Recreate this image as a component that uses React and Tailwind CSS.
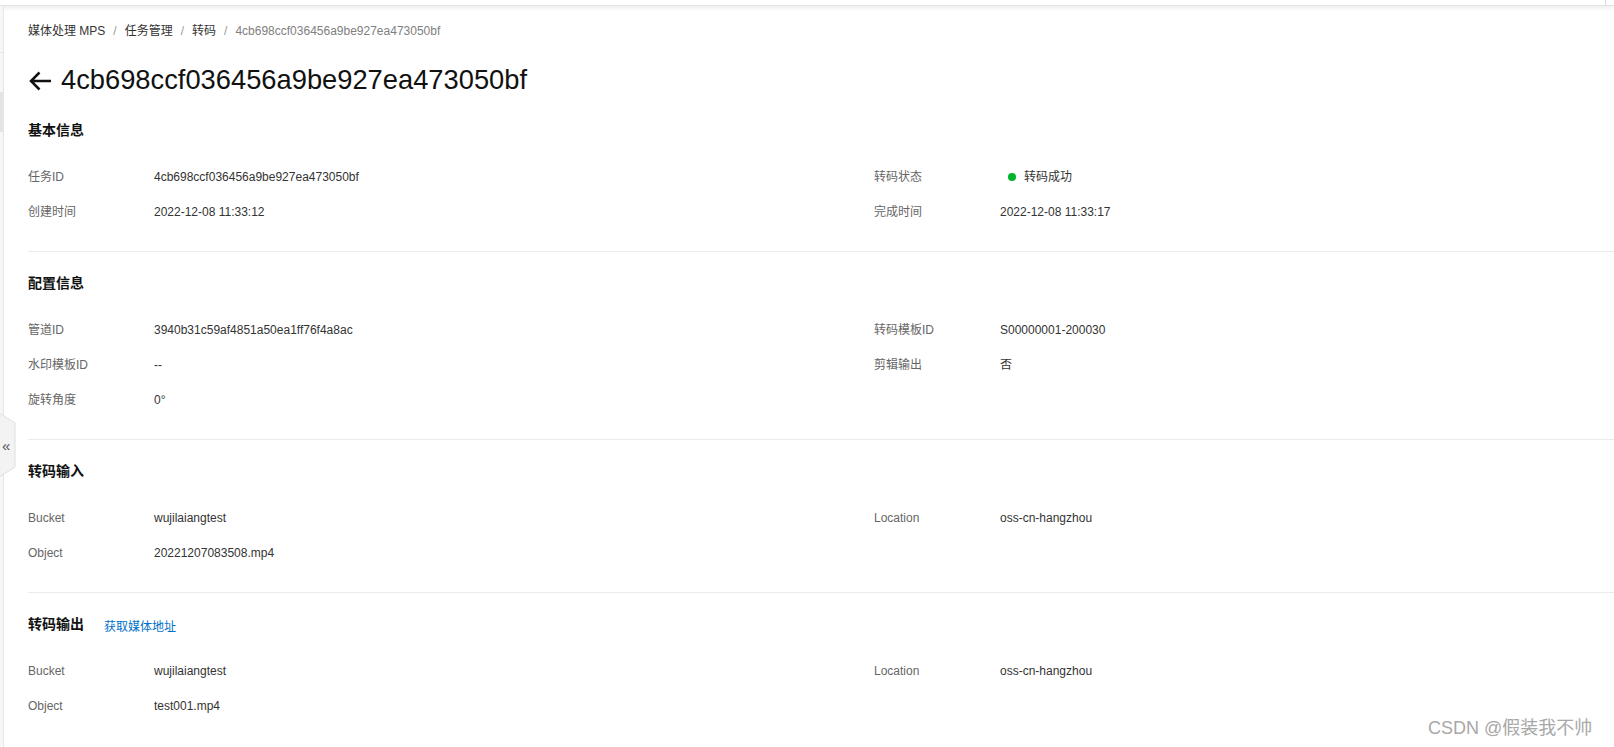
const font = { fontFamily: '"Liberation Sans", "Noto Sans CJK SC", sans-serif' };

function Row({ items }) {
  return (
    <div className="flex h-[35px] items-center text-[12px]">
      {items.map((it, i) => (
        <div key={i} className="flex w-[846px] shrink-0 items-center">
          {it && (
            <>
              <div className="w-[126px] shrink-0 text-[#666]">{it.label}</div>
              <div className="flex items-center text-[#333]">
                {it.dot && <span className="mr-[8px] ml-[8px] inline-block h-[8px] w-[8px] rounded-full bg-[#00b42a]" />}
                {it.value}
              </div>
            </>
          )}
        </div>
      ))}
    </div>
  );
}

function Section({ title, extra, rows, last }) {
  return (
    <div className={`${last ? "" : "border-b border-[#ebebeb]"} pt-[21px] pb-[22px]`}>
      <div className="mb-[18px] flex h-[21px] items-center">
        <span className="text-[14px] font-bold text-[#111]">{title}</span>
        {extra && <span className="ml-[20px] mt-[4px] text-[12px] text-[#0070cc]">{extra}</span>}
      </div>
      {rows.map((r, i) => (
        <Row key={i} items={r} />
      ))}
    </div>
  );
}

export default function App() {
  return (
    <div className="relative h-[747px] w-[1614px] overflow-hidden bg-white" style={font}>
      {/* top bar */}
      <div className="flex h-[6px] w-full justify-end border-b border-[#e3e3e3] bg-white shadow-[0_2px_4px_rgba(0,0,0,0.08)]">
        <div className="w-[9px] border-l border-[#dcdcdc]" />
      </div>
      <div className="flex h-[741px]">
        {/* sidebar strip */}
        <div className="flex w-[4px] shrink-0 flex-col border-r border-[#e6e6e6] bg-[#f7f7f7]">
          <div className="h-[47px] border-b border-[#e6e6e6]" />
          <div className="mt-[39px] h-[40px] bg-[#e4e4e4]" />
        </div>
        <div className="flex-1 pl-[24px]">
          {/* breadcrumb */}
          <div className="mt-[15px] flex h-[20px] items-center text-[12px] text-[#333]">
            <span>媒体处理 MPS</span>
            <span className="mx-[8px] text-[#999]">/</span>
            <span>任务管理</span>
            <span className="mx-[8px] text-[#999]">/</span>
            <span>转码</span>
            <span className="mx-[8px] text-[#999]">/</span>
            <span className="text-[#808080]">4cb698ccf036456a9be927ea473050bf</span>
          </div>
          {/* title */}
          <div className="mt-[21px] flex h-[36px] items-center">
            <svg width="24" height="24" viewBox="0 0 24 24" className="mr-[9px] mt-[2px]">
              <path d="M23 12H3M11.5 3.5L3 12l8.5 8.5" fill="none" stroke="#111" strokeWidth="2.5" />
            </svg>
            <span className="text-[27.3px] text-[#111]">4cb698ccf036456a9be927ea473050bf</span>
          </div>
          <div className="mt-[1px]">
            <Section
              title="基本信息"
              rows={[
                [
                  { label: "任务ID", value: "4cb698ccf036456a9be927ea473050bf" },
                  { label: "转码状态", value: "转码成功", dot: true },
                ],
                [
                  { label: "创建时间", value: "2022-12-08 11:33:12" },
                  { label: "完成时间", value: "2022-12-08 11:33:17" },
                ],
              ]}
            />
            <Section
              title="配置信息"
              rows={[
                [
                  { label: "管道ID", value: "3940b31c59af4851a50ea1ff76f4a8ac" },
                  { label: "转码模板ID", value: "S00000001-200030" },
                ],
                [
                  { label: "水印模板ID", value: "--" },
                  { label: "剪辑输出", value: "否" },
                ],
                [{ label: "旋转角度", value: "0°" }, null],
              ]}
            />
            <Section
              title="转码输入"
              rows={[
                [
                  { label: "Bucket", value: "wujilaiangtest" },
                  { label: "Location", value: "oss-cn-hangzhou" },
                ],
                [{ label: "Object", value: "20221207083508.mp4" }, null],
              ]}
            />
            <Section
              title="转码输出"
              extra="获取媒体地址"
              last
              rows={[
                [
                  { label: "Bucket", value: "wujilaiangtest" },
                  { label: "Location", value: "oss-cn-hangzhou" },
                ],
                [{ label: "Object", value: "test001.mp4" }, null],
              ]}
            />
          </div>
        </div>
      </div>
      {/* collapse tab */}
      <div className="absolute left-0 top-[413px] flex h-[64px] w-[16px] items-center">
        <svg width="16" height="64" viewBox="0 0 16 64" className="absolute left-0 top-0">
          <path d="M0 0.5 L15 10 L15 54 L0 63.5" fill="#f3f3f3" stroke="#dedede" />
        </svg>
        <span className="relative ml-[2px] text-[15px] leading-none text-[#555]">«</span>
      </div>
      {/* watermark */}
      <div className="absolute left-[1428px] top-[717px] text-[18px] leading-[22px] text-[#a8a8a8] [text-shadow:0_0_1px_#fff]">
        CSDN @假装我不帅
      </div>
    </div>
  );
}
